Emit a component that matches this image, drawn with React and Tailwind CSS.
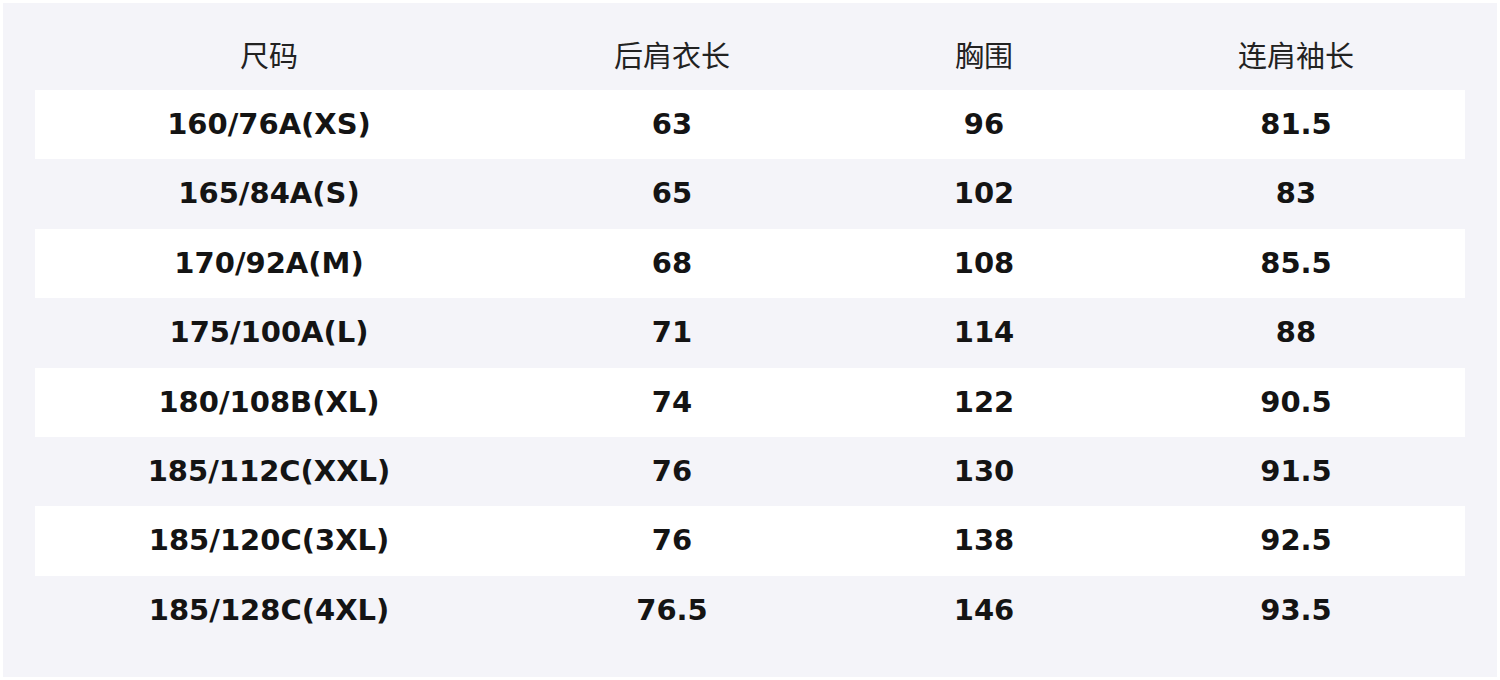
import React from "react";

const HEADERS = ["尺码", "后肩衣长", "胸围", "连肩袖长"];

const ROWS = [
  ["160/76A(XS)", "63", "96", "81.5"],
  ["165/84A(S)", "65", "102", "83"],
  ["170/92A(M)", "68", "108", "85.5"],
  ["175/100A(L)", "71", "114", "88"],
  ["180/108B(XL)", "74", "122", "90.5"],
  ["185/112C(XXL)", "76", "130", "91.5"],
  ["185/120C(3XL)", "76", "138", "92.5"],
  ["185/128C(4XL)", "76.5", "146", "93.5"],
];

const GRID = "grid grid-cols-[468px_338px_286px_338px]";

export default function App() {
  return (
    <div className="w-[1500px] h-[680px] bg-white p-[3px]">
      <div
        className="h-full bg-[#f4f4f9] px-[32px] pt-[17px]"
        style={{ fontFamily: '"DejaVu Sans", "Noto Sans CJK SC", sans-serif' }}
      >
        {/* 表头 */}
        <div className={`${GRID} h-[70px] items-center text-[29px] text-[#222]`}>
          {HEADERS.map((h) => (
            <div
              key={h}
              className="text-center"
              style={{ fontFamily: '"Noto Sans CJK SC", sans-serif' }}
            >
              {h}
            </div>
          ))}
        </div>
        {ROWS.map((row, i) => (
          <div
            key={row[0]}
            className={`${GRID} h-[69.4px] items-center text-[29px] font-bold text-[#141414] ${
              i % 2 === 0 ? "bg-white" : ""
            }`}
          >
            {row.map((cell, j) => (
              <div key={j} className="text-center">
                {cell}
              </div>
            ))}
          </div>
        ))}
      </div>
    </div>
  );
}
